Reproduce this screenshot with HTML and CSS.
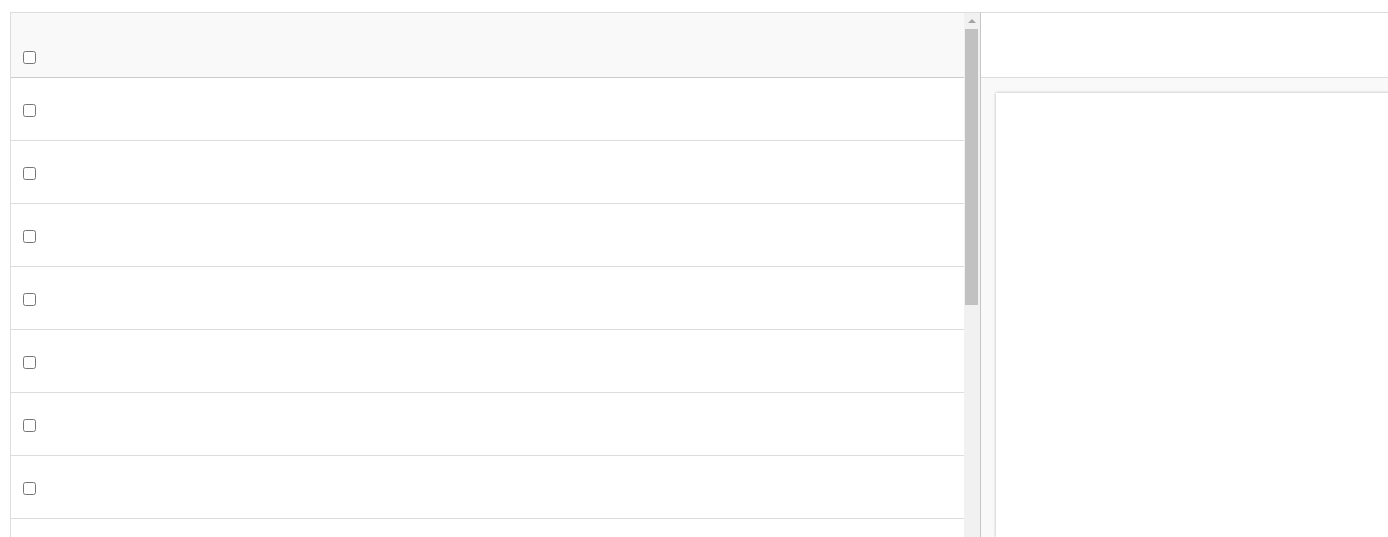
FILE: index.html
```html
<!DOCTYPE html>
<html lang="en">
<head>
<meta charset="utf-8">
<title>List</title>
<link rel="stylesheet" href="styles.css">
</head>
<body>
<div class="app">
  <section class="list">
    <div class="table">
      <div class="thead"><input type="checkbox" class="cb"></div>
      <div class="row"><input type="checkbox" class="cb"></div>
      <div class="row"><input type="checkbox" class="cb"></div>
      <div class="row"><input type="checkbox" class="cb"></div>
      <div class="row"><input type="checkbox" class="cb"></div>
      <div class="row"><input type="checkbox" class="cb"></div>
      <div class="row"><input type="checkbox" class="cb"></div>
      <div class="row"><input type="checkbox" class="cb"></div>
      <div class="row"><input type="checkbox" class="cb"></div>
    </div>
    <div class="scrollbar">
      <div class="sb-btn"><span class="sb-arrow"></span></div>
      <div class="sb-thumb"></div>
    </div>
  </section>
  <section class="detail">
    <div class="detail-head"></div>
    <div class="detail-body">
      <div class="card"></div>
    </div>
  </section>
</div>
</body>
</html>
```
FILE: styles.css
```css
html, body {
  margin: 0;
  padding: 0;
  background: #fff;
  overflow: hidden;
  font-family: "Liberation Sans", Arial, sans-serif;
}
.app {
  display: flex;
  align-items: stretch;
  padding: 12px 0 0 10px;
  height: 537px;
  box-sizing: border-box;
  width: 1500px;
}
.list {
  flex: none;
  width: 970px;
  display: flex;
  border-top: 1px solid #dddddd;
  border-left: 1px solid #dddddd;
  box-sizing: border-box;
}
.table {
  flex: 1;
  overflow: hidden;
}
.thead {
  background: #f9f9f9;
  border-bottom: 1px solid #cccccc;
  display: flex;
  align-items: flex-end;
  padding: 0 0 10px 8px;
  height: 54px;
}
.row {
  height: 60px;
  padding-top: 2px;
  border-bottom: 1px solid #dddddd;
  display: flex;
  align-items: center;
  padding-left: 8px;
}
.cb {
  width: 13px;
  height: 13px;
  margin: 3px 3px 3px 4px;
}
.scrollbar {
  flex: none;
  width: 16px;
  background: #f1f1f1;
  display: flex;
  flex-direction: column;
}
.sb-btn {
  height: 16px;
  display: flex;
  align-items: center;
  justify-content: center;
}
.sb-arrow {
  width: 0;
  height: 0;
  border-left: 4px solid transparent;
  border-right: 4px solid transparent;
  border-bottom: 4px solid #a3a3a3;
  margin-left: -1px;
}
.sb-thumb {
  height: 276px;
  margin: 0 2px 0 1px;
  background: #c1c1c1;
}
.detail {
  flex: none;
  width: 520px;
  display: flex;
  flex-direction: column;
  border-top: 1px solid #dddddd;
  border-left: 1px solid #c6c6c6;
}
.detail-head {
  height: 64px;
  background: #fff;
  border-bottom: 1px solid #dddddd;
}
.detail-body {
  flex: 1;
  background: #f9f9f9;
  padding: 15px 0 0 15px;
  display: flex;
}
.card {
  flex: 1;
  background: #fff;
  box-shadow: 0 0 3px rgba(0, 0, 0, 0.28);
}
```
